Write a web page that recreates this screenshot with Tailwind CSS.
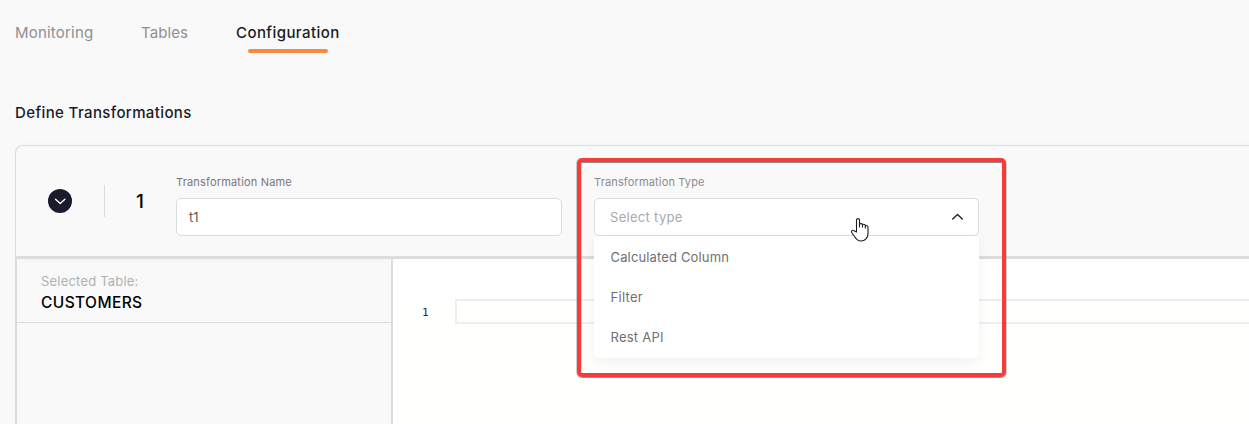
<!DOCTYPE html>
<html lang="en">
<head>
<meta charset="utf-8">
<title>Define Transformations</title>
<script src="https://cdn.jsdelivr.net/npm/@tailwindcss/browser@4"></script>
</head>
<body class="relative h-[424px] w-[1249px] overflow-hidden bg-[#f9f9f9] font-['Inter','Liberation_Sans',sans-serif] text-[#1a1a2b] whitespace-nowrap">
  <nav class="flex h-[53px] gap-12 pl-[15px] pt-[21px] text-[15px] leading-6 text-[#8f8f93]">
    <a class="w-[78px]"><span class="tracking-[0.2px]">Monitoring</span></a>
    <a class="w-[47px]"><span class="tracking-[0.1px]">Tables</span></a>
    <a class="flex w-[104px] flex-col font-medium text-[#1a1a24]"><span class="tracking-[0.42px]">Configuration</span><i class="ml-3 mt-1 block h-1 w-20 shrink-0 rounded-sm bg-[#f68b3e]"></i></a>
  </nav>
  <h2 class="mt-12 pl-[15px] text-[15px] font-medium leading-6"><span class="tracking-[0.37px]">Define Transformations</span></h2>

  <section class="ml-[15px] mt-5 w-[1240px]">
    <header class="flex h-[114px] rounded-tl-lg border-t border-l border-b-[3px] border-[#dcdcdc] border-b-[#dbdcdd] shadow-[0_0_6px_rgba(0,0,0,0.03)]">
      <button class="ml-8 mt-[43px] flex size-6 items-center justify-center rounded-full bg-[#1a1b2c]">
        <svg class="size-6" viewBox="0 0 24 24" fill="none" stroke="#fff" stroke-width="1.4" stroke-linecap="round" stroke-linejoin="round"><path d="M7.500 10.300l4.700 4.200 4.700-4.200"/></svg>
      </button>
      <span class="ml-8 mt-[39px] h-8 w-px bg-[#dcdcdc]"></span>
      <span class="ml-[31px] mt-[42px] w-10 text-[19px] font-medium leading-7 text-black">1</span>
      <div class="w-[386px] pt-7">
        <label class="block h-4 text-[11px] leading-4 text-[#77777b]"><span class="tracking-[0.18px]">Transformation Name</span></label>
        <div class="mt-2 flex h-[38px] items-center rounded-[5px] border border-[#dcdcdc] bg-white pl-3 pt-px text-[13px] text-[#6b5848]">t1</div>
      </div>
      <div class="ml-8 w-[385px] pt-7">
        <label class="block h-4 text-[11px] leading-4 text-[#8b8b90]"><span class="tracking-[0.15px]">Transformation Type</span></label>
        <div class="mt-2 flex h-[38px] items-center justify-between rounded-[5px] border border-[#dcdcdc] bg-white pl-[15px] pr-[14px] pt-px text-[13px] text-[#a9a9ae]">
          <span class="tracking-[0.3px]">Select type</span>
          <svg class="-mt-px h-[10px] w-[14px]" viewBox="0 0 14 10" fill="none" stroke="#222" stroke-width="1.4" stroke-linecap="round" stroke-linejoin="round"><path d="M2.700 7L7.500 2.500l4.800 4.500"/></svg>
        </div>
      </div>
    </header>
    <div class="flex h-[165px] border-l-2 border-[#dbdcde]">
      <aside class="w-[376px] border-r-2 border-[#dbdcde]">
        <div class="h-16 border-b border-[#dcdcdc] pl-6 pt-3">
          <p class="text-[13px] leading-[21px] text-[#b1b1b4]"><span class="tracking-[0.2px]">Selected Table:</span></p>
          <p class="text-[15.5px] font-medium leading-[21px] text-black"><span class="tracking-[0.4px]">CUSTOMERS</span></p>
        </div>
      </aside>
      <main class="flex-1 bg-white pt-10">
        <div class="flex h-[125px] bg-[#fffffd]">
          <span class="w-[62px] pl-[29px] pt-[6px] font-['DejaVu_Sans_Mono',monospace] text-[11px] leading-4 text-[#202060]">1</span>
          <span class="h-[25px] flex-1 border-2 border-[#eee]"></span>
        </div>
      </main>
    </div>
  </section>

  <ul class="absolute left-[594px] top-[236px] h-[122px] w-[385px] rounded-[4px] bg-white pl-[16.5px] pt-[1px] text-[13px] leading-10 text-[#707074] shadow-[0_4px_12px_rgba(0,0,0,0.06)]">
    <li><span class="tracking-[0.15px]">Calculated Column</span></li>
    <li><span class="tracking-[0.3px]">Filter</span></li>
    <li><span class="tracking-[0.25px]">Rest API</span></li>
  </ul>
  <div class="absolute left-[577px] top-[158px] h-[219px] w-[429px] rounded-[5px] border-4 border-[#f33d3d] shadow-[0_1px_0_0_rgba(70,60,60,0.55),1px_0_0_0_rgba(90,60,60,0.25),-1px_0_0_0_rgba(90,60,60,0.25),inset_0_1px_0_0_rgba(70,60,60,0.6),inset_1px_0_0_0_rgba(90,60,60,0.2)]"></div>
  <svg class="absolute left-[850px] top-[217px] h-[26px] w-5" viewBox="0 0 20 26" fill="#fff" stroke="#1a1b2c" stroke-width="1.1" stroke-linejoin="round" stroke-linecap="round"><path d="M6.500 15V3c0-1.800 3-1.800 3 0v7V7.300c0-1 3-1 3 .300V10 8c0-1 2.800-1 2.800.500V11 9.200c0-1 2.700-1 2.700.800v6.500c0 4.500-3 7.500-7 7.500-3.500 0-5-2-6.500-4.500L1.800 15.700C.800 14 2.500 12.500 4 13.700z"/></svg>
</body>
</html>
